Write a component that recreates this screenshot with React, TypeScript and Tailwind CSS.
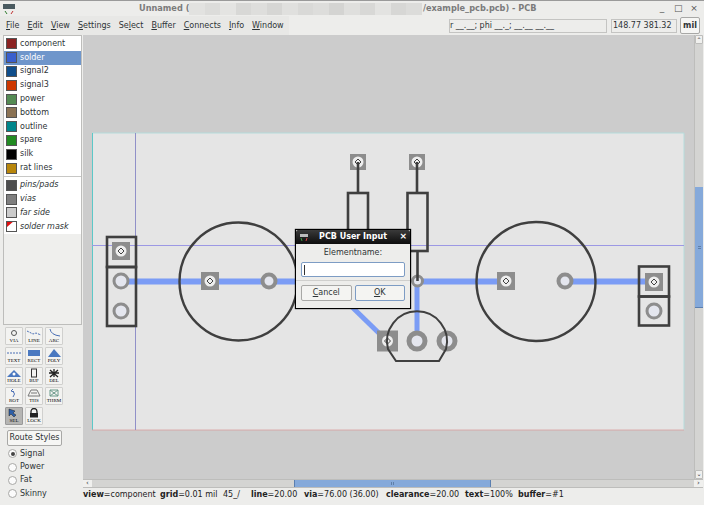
import React from 'react';

const layers = [
  { name: 'component', color: 'bg-[#8b2323]' },
  { name: 'solder', color: 'bg-[#3a5fcd]', active: true },
  { name: 'signal2', color: 'bg-[#104e8b]' },
  { name: 'signal3', color: 'bg-[#cd3700]' },
  { name: 'power', color: 'bg-[#548b54]' },
  { name: 'bottom', color: 'bg-[#8b7355]' },
  { name: 'outline', color: 'bg-[#00868b]' },
  { name: 'spare', color: 'bg-[#228b22]' },
  { name: 'silk', color: 'bg-black' },
  { name: 'rat lines', color: 'bg-[#b8860b]' },
];

const specials = [
  { name: 'pins/pads', color: 'bg-[#4d4d4d]' },
  { name: 'vias', color: 'bg-[#7f7f7f]' },
  { name: 'far side', color: 'bg-[#cccccc]' },
];

const tools: { label: string; icon: React.ReactNode }[] = [
  { label: 'VIA', icon: <><circle cx="9" cy="5" r="2.5" fill="none" stroke="#555" /></> },
  { label: 'LINE', icon: <path d="M2 3 L8 6 L11 5 L16 7" fill="none" stroke="#4a6fb5" strokeDasharray="2 1" /> },
  { label: 'ARC', icon: <path d="M5 1 Q6 7 15 8" fill="none" stroke="#4a6fb5" /> },
  { label: 'TEXT', icon: <path d="M2 5 H16" fill="none" stroke="#4a6fb5" strokeDasharray="2 1" /> },
  { label: 'RECT', icon: <rect x="3" y="2" width="12" height="6" fill="#4a78c0" /> },
  { label: 'POLY', icon: <path d="M3 9 L9 1 L16 9 Z" fill="#4a78c0" /> },
  { label: 'HOLE', icon: <><path d="M2 9 L9 2 L16 9 Z" fill="#4a78c0" /><circle cx="9" cy="6" r="1.5" fill="#fff" /></> },
  { label: 'BUF', icon: <rect x="6.5" y="1" width="5" height="8" fill="none" stroke="#333" /> },
  { label: 'DEL', icon: <path d="M5 2 L13 9 M13 2 L5 9 M9 1 V9 M4 5 H14" fill="none" stroke="#222" strokeWidth="1.3" /> },
  { label: 'ROT', icon: <path d="M8 9 Q11 6 8 3 M8 1 L6 3 L9 4" fill="none" stroke="#4a6fb5" /> },
  { label: 'THS', icon: <path d="M3 8 L6 2 H12 L15 8 Z M6 5 H12" fill="none" stroke="#777" /> },
  { label: 'THRM', icon: <path d="M5 2 H13 V8 H5 Z M5 2 L13 8 M13 2 L5 8" fill="none" stroke="#6a9a8a" /> },
  { label: 'SEL', icon: <path d="M4 1 L4 8 L6 6 L9 9 L11 7 L8 5 L10 3 Z" fill="#2d5fa8" stroke="#222" strokeWidth="0.5" /> },
  { label: 'LOCK', icon: <><path d="M6 5 V3.5 A3 3 0 0 1 12 3.5 V5" fill="none" stroke="#222" strokeWidth="1.3" /><rect x="5" y="5" width="8" height="4.5" fill="#222" /></> },
];

const routeStyles = ['Signal', 'Power', 'Fat', 'Skinny'];

// greys standing in for the pixelated part of the file path
const blur = ['#e2e2e0', '#dcdcda', '#e4e4e2', '#d8d8d6', '#dededc', '#d6d6d4', '#e0e0de', '#d9d9d7', '#dddddb', '#d4d4d2', '#dfdfdd', '#d8d8d6', '#e3e3e1', '#d7d7d5', '#dcdcda'];

function Board() {
  const track = '#7b9cf5';
  const dark = '#3f3f3f';
  const pin = '#8d8d8d';
  const ring = (cx: number, cy: number, r = 7, w = 3) => (
    <circle cx={cx} cy={cy} r={r} fill="#e4e6ee" stroke={pin} strokeWidth={w} />
  );
  const pad = (cx: number, cy: number, s = 18) => (
    <g>
      <rect x={cx - s / 2} y={cy - s / 2} width={s} height={s} fill={pin} />
      <circle cx={cx} cy={cy} r="5.5" fill="#eeeeee" />
      <path d={`M${cx - 3} ${cy} L${cx} ${cy - 3} L${cx + 3} ${cy} L${cx} ${cy + 3} Z`} fill="none" stroke="#444" strokeWidth="1" />
    </g>
  );
  return (
    <svg viewBox="83 35 611 444" className="block w-full h-full">
      <rect x="92" y="133" width="592" height="297" fill="#e5e5e5" />
      <path d="M92 133 H684 V430" fill="none" stroke="#b5dcdc" strokeWidth="1" />
      <path d="M92.5 133 V430" stroke="#5cc8c8" strokeWidth="1" />
      <path d="M92 430 H684" stroke="#d9a0a0" strokeWidth="0.8" />
      <path d="M135.500 133 V430" stroke="#9090c8" strokeWidth="1" />
      <path d="M92 245.5 H684" stroke="#9c98e4" strokeWidth="1" />
      <g stroke={track} strokeWidth="6" fill="none">
        <path d="M125 281.5 H300" />
        <path d="M418 281.5 H506" />
        <path d="M565 281.5 H654" />
      </g>
      <g stroke={track} strokeWidth="5" fill="none">
        <path d="M417 282 V341" />
        <path d="M350 305 L387 341" />
      </g>
      {pad(121, 251)}
      {ring(121, 281, 7, 3)}
      {ring(121, 311, 7, 3)}
      {pad(210, 281)}
      {ring(269, 281, 6.5, 4)}
      {pad(358, 162, 16)}
      {pad(417, 162, 16)}
      {pad(387.5, 341, 21)}
      {ring(417, 341, 8, 5)}
      {ring(447, 341, 8, 5)}
      {ring(417.500, 281, 5, 3)}
      {pad(506, 281)}
      {ring(565, 281, 6.5, 4)}
      {pad(654, 282)}
      {ring(654, 311, 7, 3)}
      <g stroke={dark} strokeWidth="2.6" fill="none">
        <rect x="107" y="237" width="29" height="30" />
        <rect x="107" y="267" width="29" height="59" />
        <circle cx="238.5" cy="281.5" r="59" strokeWidth="2.4" />
        <path d="M358 162 V193" />
        <rect x="348" y="193" width="20" height="60" />
        <path d="M417 162 V193" />
        <rect x="407.500" y="193" width="20" height="58" />
        <path d="M417.500 251 V281" />
        <path d="M396 361 H439 L446 349 A30 30 0 1 0 388 349 Z" strokeWidth="2" />
        <circle cx="536" cy="281.5" r="59.5" strokeWidth="2.4" />
        <rect x="639" y="266.500" width="30" height="30" />
        <rect x="639" y="296.500" width="30" height="29" />
      </g>
    </svg>
  );
}

export default function App() {
  return (
    <div className="w-[704px] h-[505px] overflow-hidden flex flex-col bg-[#ededeb] font-['DejaVu_Sans',sans-serif] text-[8px] text-[#2e3436]">
      {/* title bar */}
      <div className="relative h-[16px] shrink-0 flex items-center pl-[139px] font-bold text-[#7b7b7b] border-t border-[#9a9a9a] text-[8.2px]">
        <svg width="14" height="12" viewBox="0 0 14 12" className="absolute left-[2px] top-[2px]">
          <rect x="1" y="1" width="12" height="5" fill="#4a5a60" />
          <path d="M3 8 L5 11" stroke="#2f7d2f" />
          <path d="M9 11 L11 8" stroke="#c03030" />
        </svg>
        <span className="w-[50px] whitespace-nowrap">Unnamed (</span>
        <span className="flex h-[12px] w-[233px] mr-[1px]">
          {blur.map((c, i) => (
            <span key={i} className="flex-1 h-full" style={{ backgroundColor: c }} />
          ))}
        </span>
        <span className="whitespace-nowrap">/example_pcb.pcb) - PCB</span>
        <span className="absolute right-[6px] top-[1px] flex gap-[8px] text-[#555] text-[9px] font-normal">
          <span className="w-[8px] text-center">_</span>
          <span className="w-[8px] text-center">□</span>
          <span className="w-[8px] text-center">×</span>
        </span>
      </div>

      {/* menu + readouts */}
      <div className="h-[19px] shrink-0 flex items-center relative">
        <div className="flex gap-[8px] pl-[6px] pr-[5px] h-full items-center bg-[#e8e8e6]">
          <span><u>F</u>ile</span>
          <span><u>E</u>dit</span>
          <span><u>V</u>iew</span>
          <span><u>S</u>ettings</span>
          <span>Se<u>l</u>ect</span>
          <span><u>B</u>uffer</span>
          <span><u>C</u>onnects</span>
          <span><u>I</u>nfo</span>
          <span><u>W</u>indow</span>
        </div>
        <div className="ml-auto flex items-center pr-[4px]">
          <div className="w-[158px] h-[14px] border border-[#c4c4c2] bg-[#ededeb] leading-[12px] whitespace-nowrap overflow-hidden">r __.__; phi __._; __.__ __.__</div>
          <div className="ml-[4px] w-[66px] h-[14px] border border-[#c4c4c2] pl-[1px] leading-[12px] whitespace-nowrap">148.77 381.32</div>
          <div className="ml-[3px] w-[20px] h-[17px] border border-[#a8a8a6] rounded-[2px] bg-[#f6f6f4] flex items-center justify-center font-bold text-[8px]">mil</div>
        </div>
      </div>

      <div className="flex-1 flex min-h-0">
        {/* left column */}
        <div className="w-[83px] shrink-0 pl-[3px] flex flex-col">
          <div className="w-[79px] h-[290px] border border-[#bdbdbb] bg-[#efefed] flex flex-col">
            <div className="bg-white pt-[1px]">
              {layers.map((l) => (
                <div key={l.name} className={`h-[13.8px] flex items-center pl-[1px] ${l.active ? 'bg-[#6f96cb] text-white' : ''}`}>
                  <span className={`w-[11px] h-[11px] ml-[1px] border border-[#555] ${l.color}`} />
                  <span className="ml-[3px]">{l.name}</span>
                </div>
              ))}
              <div className="h-[1px] bg-[#c8c8c6] mt-[1.5px] mb-[1px]" />
              {specials.map((l) => (
                <div key={l.name} className="h-[13.8px] flex items-center pl-[1px] italic">
                  <span className={`w-[11px] h-[11px] ml-[1px] border border-[#555] ${l.color}`} />
                  <span className="ml-[3px]">{l.name}</span>
                </div>
              ))}
              <div className="h-[13.8px] flex items-center pl-[1px] italic">
                <svg width="11" height="11" viewBox="0 0 11 11" className="ml-[1px] border border-[#555] bg-white">
                  <path d="M0 0 H7 L0 6 Z" fill="#e01010" />
                </svg>
                <span className="ml-[3px]">solder mask</span>
              </div>
            </div>
          </div>

          <div className="ml-[2px] mt-[2px] grid grid-cols-[18px_18px_18px] gap-x-[2px] gap-y-[2px]">
            {tools.map((t) => (
              <div
                key={t.label}
                className={`h-[18px] border rounded-[1px] flex flex-col items-center overflow-hidden ${t.label === 'SEL' ? 'bg-[#b5b5b3] border-[#999]' : 'bg-[#f3f3f1] border-[#d0d0ce]'}`}
              >
                <svg width="18" height="10" viewBox="0 0 18 10" className="shrink-0">{t.icon}</svg>
                <span className="text-[5px] leading-[6px] text-black font-['Liberation_Serif',serif] whitespace-nowrap">{t.label}</span>
              </div>
            ))}
          </div>

          <div className="h-[1px] bg-[#cfcfcd] mt-[2px] w-[78px]" />

          <div className="ml-[4px] mt-[2px] w-[55px] h-[16px] border border-[#a8a8a6] rounded-[2px] bg-[#f6f6f4] flex items-center justify-center whitespace-nowrap">Route Styles</div>

          <div className="ml-[5px] mt-[1px] flex flex-col">
            {routeStyles.map((s, i) => (
              <div key={s} className="h-[13.4px] flex items-center">
                <span className="w-[9px] h-[9px] rounded-full border border-[#a8a8a6] bg-[#fbfbfb] flex items-center justify-center">
                  {i === 0 && <span className="w-[4px] h-[4px] rounded-full bg-[#444]" />}
                </span>
                <span className="ml-[3px]">{s}</span>
              </div>
            ))}
          </div>
        </div>

        {/* canvas, scrollbars, status */}
        <div className="flex-1 flex flex-col min-w-0">
          <div className="flex h-[444px] shrink-0">
            <div className="relative flex-1 bg-[#cccccc] min-w-0">
              <Board />
              {/* input dialog */}
              <div className="absolute left-[212px] top-[194px] w-[116px] h-[80px] border border-black bg-[#ededeb] flex flex-col shadow-[0_0_1px_#000]">
                <div className="h-[14px] shrink-0 bg-gradient-to-b from-[#3a3a3a] to-[#0e0e0e] text-white font-bold flex items-center justify-center relative rounded-t-[2px]">
                  <svg width="10" height="8" viewBox="0 0 10 8" className="absolute left-[3px] top-[3px]">
                    <rect x="1" y="1" width="8" height="3" fill="#bbbbbb" />
                    <path d="M2 5 L3 8" stroke="#3a9a3a" />
                    <path d="M7 8 L8 5" stroke="#d04040" />
                  </svg>
                  <span className="text-[8px]">PCB User Input</span>
                  <span className="absolute right-[3px] top-0 leading-[13px] text-[9px]">×</span>
                </div>
                <div className="text-center mt-[3px] h-[12px] leading-[12px]">Elementname:</div>
                <div className="mx-[5px] mt-[3px] h-[15px] bg-white border border-[#7d9cc4] rounded-[2px] flex items-center pl-[2px]">
                  <span className="w-[1px] h-[10px] bg-[#333]" />
                </div>
                <div className="h-[1px] bg-[#cfcfcd] mt-[3px]" />
                <div className="flex gap-[3px] mx-[5px] mt-[4px]">
                  <div className="w-[51px] h-[16px] border border-[#a8a8a6] rounded-[2px] bg-[#f4f4f2] flex items-center justify-center"><span><u>C</u>ancel</span></div>
                  <div className="w-[51px] h-[16px] border border-[#7d9cc4] rounded-[2px] bg-[#f4f4f2] flex items-center justify-center"><span><u>O</u>K</span></div>
                </div>
              </div>
            </div>
            {/* vertical scrollbar */}
            <div className="w-[9px] shrink-0 mr-[1px] bg-[#d4d4d2] border-l border-[#bdbdbb] flex flex-col">
              <div className="h-[9px] bg-[#f0f0ee] border border-[#bdbdbb] rounded-[1px] text-[6px] leading-[7px] text-center">⌃</div>
              <div className="mt-[143px] h-[121px] bg-[#85a9da] border-b border-[#5b7fb0] flex items-center justify-center">
                <span className="w-[3px] h-[3px] border-y border-[#5f7fa8]" />
              </div>
              <div className="mt-auto h-[9px] bg-[#f0f0ee] border border-[#bdbdbb] rounded-[1px] text-[6px] leading-[6px] text-center">⌄</div>
            </div>
          </div>

          {/* horizontal scrollbar */}
          <div className="h-[9px] shrink-0 flex items-center bg-[#d4d4d2] border-y border-[#bdbdbb] mr-[1px]">
            <div className="w-[9px] h-full bg-[#f0f0ee] text-[7px] leading-[7px] text-center">‹</div>
            <div className="ml-[202px] w-[197px] h-full bg-[#85a9da] border-x border-[#5b7fb0] flex items-center justify-center">
              <span className="w-[3px] h-[3px] border-x border-[#5f7fa8]" />
            </div>
            <div className="ml-auto w-[9px] h-full bg-[#f0f0ee] text-[7px] leading-[7px] text-center">›</div>
          </div>

          {/* status line */}
          <div className="h-[13px] shrink-0 flex items-center whitespace-nowrap text-[8px] text-[#222]">
            <span className="w-[77px]"><b>view</b>=component</span>
            <span className="w-[63px]"><b>grid</b>=0.01 mil</span>
            <span className="w-[28px]">45_/</span>
            <span className="w-[53px]"><b>line</b>=20.00</span>
            <span className="w-[82px]"><b>via</b>=76.00 (36.00)</span>
            <span className="w-[79px]"><b>clearance</b>=20.00</span>
            <span className="w-[53px]"><b>text</b>=100%</span>
            <span><b>buffer</b>=#1</span>
          </div>
        </div>
      </div>
    </div>
  );
}
